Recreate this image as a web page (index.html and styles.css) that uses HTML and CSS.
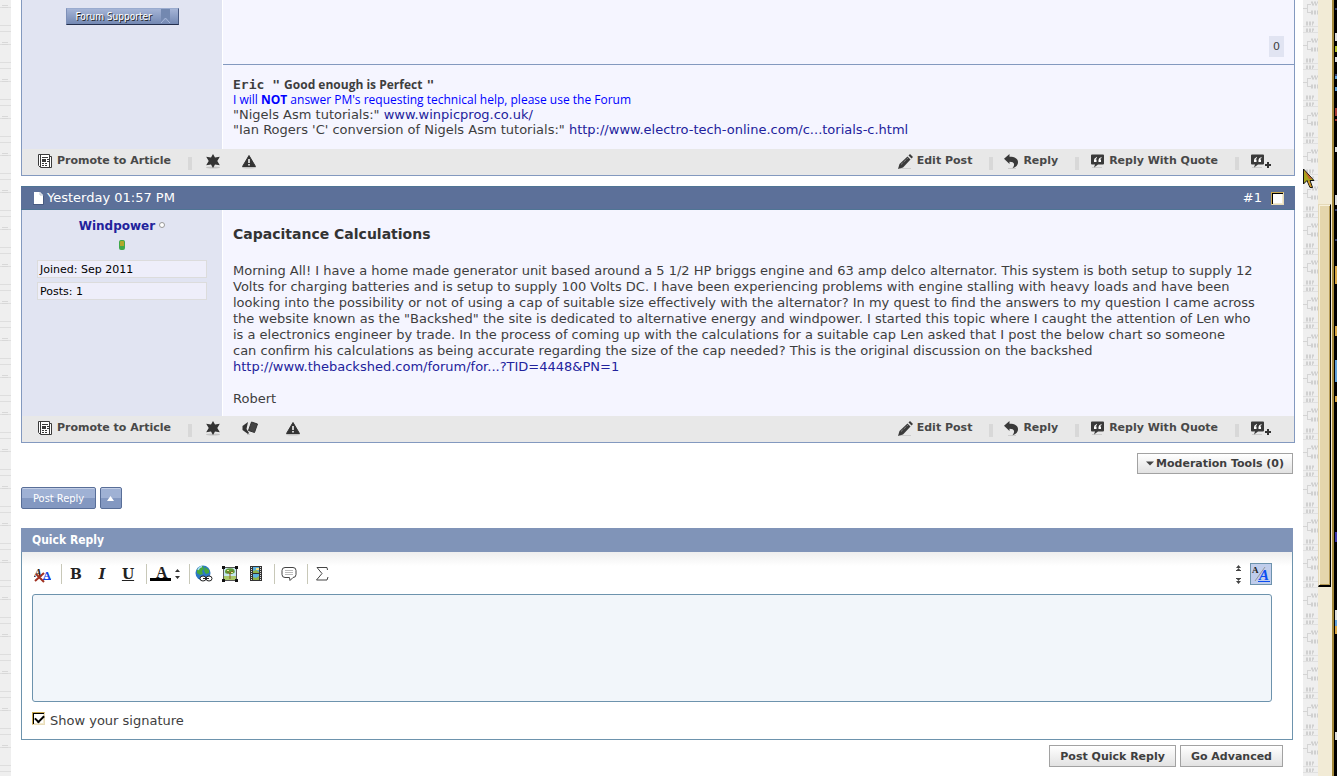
FILE: index.html
```html
<!DOCTYPE html>
<html lang="en">
<head>
    <meta charset="UTF-8">
    <meta name="viewport" content="width=device-width, initial-scale=1.0">
    <title>Capacitance Calculations</title>
    <link rel="stylesheet" href="styles.css">
</head>
<body>

    <!-- Icon set -->
    <svg class="sprite" aria-hidden="true">
        <symbol id="icon-article" viewBox="0 0 15 15">
            <path d="M.5 .5h11v2h2v11H2.500l-2-2z" fill="#fff" stroke="#3a3a3a"/>
            <path d="M2.500 1v12M11.500 2v11" stroke="#3a3a3a"/>
            <path d="M4 3.500h6M4 9.500h2M7 9.500h2M4 11.500h2M7 11.500h2" stroke="#3a3a3a"/>
            <path d="M4 5h4v3H4z" fill="#3a3a3a"/>
            <path d="M9 5.500h2M9 7.500h2" stroke="#3a3a3a"/>
        </symbol>
        <symbol id="icon-star" viewBox="0 0 15 15">
            <ellipse cx="7" cy="13.500" rx="7" ry="1" fill="#c4c4c4"/>
            <path d="M7 0l2 3.500 4.800-.8L11.300 7l2.500 4.300L9 10.500 7 14l-2-3.500-4.800.8L2.700 7 .2 2.700 5 3.500z" fill="#333"/>
        </symbol>
        <symbol id="icon-alert" viewBox="0 0 15 15">
            <ellipse cx="7" cy="13.500" rx="7" ry="1" fill="#c4c4c4"/>
            <path d="M7 1.500L13.500 12.500H.5z" fill="#333" stroke="#333" stroke-linejoin="round"/>
            <path d="M7 5v4M7 10v1.500" stroke="#fff" stroke-width="1.500"/>
        </symbol>
        <symbol id="icon-tags" viewBox="0 0 17 15">
            <path d="M6 1L.5 5v4L6 13l1-1L4.500 8z" fill="#333"/>
            <path d="M9.500 1L15.500 3 12.500 11.500 6.500 9.500z" fill="#444" stroke="#333" stroke-linejoin="round"/>
            <path d="M5 13.500h3" stroke="#ccc"/>
        </symbol>
        <symbol id="icon-pencil" viewBox="0 0 15 15">
            <path d="M2 14.500h11" stroke="#ccc"/>
            <path d="M0 15l1.500-5L9.500 2.500l3 3L5 13.500z" fill="#3a3a3a"/>
            <path d="M10.500 1.500L12 0l3 3-1.500 1.500z" fill="#3a3a3a"/>
            <path d="M3 10.500l7-6.500" stroke="#aaa" stroke-dasharray="1 1"/>
        </symbol>
        <symbol id="icon-reply" viewBox="0 0 15 15">
            <path d="M4 14.500h8" stroke="#ccc"/>
            <path d="M5.500 0v2.700C11 2.700 14 4.500 14 8.300c0 2.900-2 4.900-5.500 5.900C11 11 11 7.800 5.500 7.700V10L0 4.800z" fill="#3a3a3a"/>
        </symbol>
        <symbol id="icon-quote" viewBox="0 0 15 15">
            <path d="M2 13.500h10" stroke="#ccc"/>
            <path d="M2 .5h11q1 0 1 1v8q0 1-1 1H8L4 13.500l1-3H2q-1 0-1-1v-8q0-1 1-1z" fill="#3a3a3a"/>
            <path d="M7 3Q4 4 4 6v2h2.500V5.500h-1Q5.500 4.500 7 4zM11.500 3Q8.500 4 8.500 6v2H11V5.500h-1q0-1 1.500-1.500z" fill="#fff"/>
        </symbol>
        <symbol id="icon-plus" viewBox="0 0 7 7">
            <path d="M3 0v6M0 3h6" stroke="#333" stroke-width="2"/>
        </symbol>
    </svg>

    <!-- Left wallpaper -->
    <svg class="wallpaper wallpaper-left" aria-hidden="true">
        <defs>
            <pattern id="traces-left" width="11" height="37" patternUnits="userSpaceOnUse">
                <path d="M0 7.500h2M8 7.500h3M0 25.500h11M0 31.500h11" stroke="#dedede"/>
                <path d="M2 6l1-1 1 1 1-1 1 1 1-1 1 1M2 8l1-1 1 1 1-1 1 1 1-1 1 1" stroke="#d8d8d8" fill="none"/>
            </pattern>
        </defs>
        <rect width="100%" height="100%" fill="url(#traces-left)"/>
    </svg>

    <main class="page">

        <!-- Previous post -->
        <article class="post">
            <div class="post-main">
                <aside class="user-info">
                    <div class="supporter">Forum Supporter
                        <svg width="12" height="15" viewBox="0 0 12 15" aria-hidden="true"><path d="M1 0h9v14L5.500 9 1 14z" fill="#7388b0"/><path d="M1 14l4.500-5L10 14" fill="none" stroke="#a9b9dc"/></svg>
                    </div>
                </aside>
                <div class="post-content previous-content">
                    <div class="rating-row"><span class="rating">0</span></div>
                    <div class="signature">
                        <div class="sig-name"><span class="sig-mono">Eric "</span> <span class="sig-comic">Good enough is Perfect</span> <span class="sig-mono">"</span></div>
                        <div class="sig-notice">I will <b>NOT</b> answer PM's requesting technical help, please use the Forum</div>
                        <div>"Nigels Asm tutorials:" <a href="#">www.winpicprog.co.uk/</a></div>
                        <div>"Ian Rogers 'C' conversion of Nigels Asm tutorials:" <a href="#">http://www.electro-tech-online.com/c...torials-c.html</a></div>
                    </div>
                </div>
            </div>
            <footer class="post-actions">
                <a class="action" href="#"><svg class="icon"><use href="#icon-article"/></svg>Promote to Article</a>
                <span class="divider"></span>
                <div class="flags">
                    <a href="#" aria-label="Reputation"><svg class="icon"><use href="#icon-star"/></svg></a>
                    <a href="#" aria-label="Report"><svg class="icon"><use href="#icon-alert"/></svg></a>
                </div>
                <div class="controls">
                    <a class="action" href="#"><svg class="icon"><use href="#icon-pencil"/></svg>Edit Post</a>
                    <span class="divider"></span>
                    <a class="action" href="#"><svg class="icon"><use href="#icon-reply"/></svg>Reply</a>
                    <span class="divider"></span>
                    <a class="action" href="#"><svg class="icon"><use href="#icon-quote"/></svg>Reply With Quote</a>
                    <span class="divider"></span>
                    <a class="multiquote" href="#" aria-label="Multi-quote"><svg class="icon"><use href="#icon-quote"/></svg><svg class="icon-plus"><use href="#icon-plus"/></svg></a>
                </div>
            </footer>
        </article>

        <!-- Post #1 -->
        <article class="post">
            <header class="post-header">
                <svg width="11" height="13" viewBox="0 0 11 13" aria-hidden="true"><path d="M1 0h6l3 3v9H1z" fill="#fff"/><path d="M7 0v3h3" fill="none" stroke="#b9c0cc"/><path d="M0 12.500h10.500V4" fill="none" stroke="#485a80"/></svg>
                <span>Yesterday 01:57 PM</span>
                <a class="post-number" href="#">#1</a>
                <input class="checkbox" type="checkbox" aria-label="Select post">
            </header>
            <div class="post-main">
                <aside class="user-info">
                    <div class="user-name"><a href="#">Windpower</a> <span class="offline"></span></div>
                    <div class="reputation"></div>
                    <div class="stat">Joined: Sep 2011</div>
                    <div class="stat">Posts: 1</div>
                </aside>
                <div class="post-content post-body">
                    <h2 class="post-title">Capacitance Calculations</h2>
                    <p>Morning All! I have a home made generator unit based around a 5 1/2 HP briggs engine and 63 amp delco alternator. This system is both setup to supply 12<br>
                    Volts for charging batteries and is setup to supply 100 Volts DC. I have been experiencing problems with engine stalling with heavy loads and have been<br>
                    looking into the possibility or not of using a cap of suitable size effectively with the alternator? In my quest to find the answers to my question I came across<br>
                    the website known as the "Backshed" the site is dedicated to alternative energy and windpower. I started this topic where I caught the attention of Len who<br>
                    is a electronics engineer by trade. In the process of coming up with the calculations for a suitable cap Len asked that I post the below chart so someone<br>
                    can confirm his calculations as being accurate regarding the size of the cap needed? This is the original discussion on the backshed<br>
                    <a href="#">http://www.thebackshed.com/forum/for...?TID=4448&amp;PN=1</a></p>
                    <p>Robert</p>
                </div>
            </div>
            <footer class="post-actions">
                <a class="action" href="#"><svg class="icon"><use href="#icon-article"/></svg>Promote to Article</a>
                <span class="divider"></span>
                <div class="flags">
                    <a href="#" aria-label="Reputation"><svg class="icon"><use href="#icon-star"/></svg></a>
                    <a class="tags" href="#" aria-label="Infraction"><svg class="icon icon-wide"><use href="#icon-tags"/></svg></a>
                    <a href="#" aria-label="Report"><svg class="icon"><use href="#icon-alert"/></svg></a>
                </div>
                <div class="controls">
                    <a class="action" href="#"><svg class="icon"><use href="#icon-pencil"/></svg>Edit Post</a>
                    <span class="divider"></span>
                    <a class="action" href="#"><svg class="icon"><use href="#icon-reply"/></svg>Reply</a>
                    <span class="divider"></span>
                    <a class="action" href="#"><svg class="icon"><use href="#icon-quote"/></svg>Reply With Quote</a>
                    <span class="divider"></span>
                    <a class="multiquote" href="#" aria-label="Multi-quote"><svg class="icon"><use href="#icon-quote"/></svg><svg class="icon-plus"><use href="#icon-plus"/></svg></a>
                </div>
            </footer>
        </article>

        <div class="below-posts">
            <div class="moderation">
                <button class="button button-menu" type="button"><svg width="8" height="5" viewBox="0 0 8 5" aria-hidden="true"><path d="M0 .5h8L4 4.500z" fill="#444"/></svg>Moderation Tools (0)</button>
            </div>

            <div class="thread-buttons">
                <button class="thread-button" type="button">Post Reply</button>
                <button class="thread-button thread-button-top" type="button" aria-label="Top"><svg width="8" height="5" viewBox="0 0 8 5"><path d="M0 5h7L3.500 0z" fill="#fff"/></svg></button>
            </div>

            <!-- Quick reply -->
            <form class="quick-reply">
                <div class="reply-box">
                    <h3 class="reply-title">Quick Reply</h3>
                    <div class="reply-content">
                        <div class="toolbar">
                            <button class="tool" type="button" aria-label="Remove formatting">
                                <svg width="18" height="20" viewBox="0 0 18 20"><text class="serif slanted" x="0" y="13" font-size="12" fill="#222">A</text><text class="serif" x="9" y="15" font-size="11" fill="#1443e0">A</text><path d="M9 15.500h8" stroke="#1443e0"/><path d="M2 10l8 8M10 9l-9 8" stroke="#a03020" stroke-width="2"/></svg>
                            </button>
                            <span class="tool-divider"></span>
                            <button class="tool letter" type="button">B</button>
                            <button class="tool letter italic" type="button">I</button>
                            <button class="tool letter underline" type="button">U</button>
                            <span class="tool-divider"></span>
                            <button class="tool tool-color" type="button" aria-label="Text colour">
                                <svg width="32" height="20" viewBox="0 0 32 20"><text class="serif" x="6" y="14" font-size="16" fill="#222">A</text><path d="M0 14h21v3H0z" fill="#000"/><path d="M25 8h5l-2.500-3zM25 12h5l-2.500 3z" fill="#333"/></svg>
                            </button>
                            <span class="tool-divider"></span>
                            <button class="tool" type="button" aria-label="Link">
                                <svg width="18" height="18" viewBox="0 0 18 18"><circle cx="8" cy="8" r="7.500" fill="#2b78c4"/><path d="M2 5q2-4 6-4l1 3-2 2 1 3-3 1-3-2zM10 2l4 3v3l-3 1-2-3z" fill="#46a83d"/><path d="M3 5q1-3 4-3.500" stroke="#a9dcf5" fill="none" stroke-width="1.500"/><ellipse cx="8" cy="13.500" rx="3" ry="2.500" fill="#fff" stroke="#222"/><ellipse cx="14" cy="13.500" rx="3" ry="2.500" fill="#fff" stroke="#222"/><path d="M8 13.500h6" stroke="#222"/></svg>
                            </button>
                            <button class="tool" type="button" aria-label="Image">
                                <svg width="18" height="18" viewBox="0 0 18 18"><path d="M2.500 2.500h13v13h-13z" fill="#c6e6ef" stroke="#555"/><path d="M3 11h12v4H3z" fill="#a9c86a"/><path d="M4 7q0-3 3-3.500 4-1 6 1 2 3-1 4-2 1-4 0-4 1-4-1.500z" fill="#5f9a35"/><path d="M9 14V8l3-2M9 9L6 6.500" stroke="#8a5a20" fill="none"/><path d="M6 5h2v1H6zM10 7h2v1h-2z" fill="#e5e89a"/><path d="M1 1h3v3H1zM14 1h3v3h-3zM1 14h3v3H1zM14 14h3v3h-3z" fill="#111"/></svg>
                            </button>
                            <button class="tool" type="button" aria-label="Video">
                                <svg width="18" height="18" viewBox="0 0 18 18"><path d="M3 1h12v15H3z" fill="#333"/><path d="M6 2h6v6H6zM6 9h6v6H6z" fill="#5bb1df"/><path d="M6 8V6l3-1 3 2v1zM6 15v-3l3 1 3-2v4z" fill="#8fb34a"/><path d="M9 3h3v2H9z" fill="#efe08a"/><path d="M4.500 2v14M13.500 2v14" stroke="#ddd" stroke-dasharray="1 1"/></svg>
                            </button>
                            <span class="tool-divider"></span>
                            <button class="tool" type="button" aria-label="Quote">
                                <svg width="18" height="18" viewBox="0 0 18 18"><path d="M5 2.500h8q3 0 3 3v4q0 3-3 3l-3 3-.5-3H5q-3 0-3-3v-4q0-3 3-3z" fill="#fff" stroke="#444"/><path d="M5 5.500h8M5 7.500h8M5 9.500h8" stroke="#bbb"/></svg>
                            </button>
                            <span class="tool-divider"></span>
                            <button class="tool" type="button" aria-label="Formula">
                                <svg width="18" height="18" viewBox="0 0 18 18"><path d="M14.500 5L14 2.500H4L9 8.500 3.500 15H14l1-3" fill="none" stroke="#444"/></svg>
                            </button>
                            <button class="tool tool-resize" type="button" aria-label="Resize editor">
                                <svg width="10" height="20" viewBox="0 0 10 20"><path d="M3 4h5L5.500 1zM3 7h5L5.500 4zM3 14h5l-2.500 3zM3 17h5l-2.500 3z" fill="#444"/><path d="M3 6.500h5M3 14.500h5" stroke="#444"/></svg>
                            </button>
                            <button class="tool tool-switch" type="button" aria-label="Switch editor mode">
                                <svg width="20" height="20" viewBox="0 0 20 20"><text class="serif" x="1" y="9" font-size="9" fill="#222">A</text><path d="M4 17L14 3" stroke="#999"/><text class="serif slanted" x="8" y="16" font-size="15" fill="#0c4df0">A</text><path d="M7 17.500h12" stroke="#0c4df0"/></svg>
                            </button>
                        </div>
                        <textarea class="message" aria-label="Message"></textarea>
                        <div class="signature-option">
                            <input class="checkbox" type="checkbox" id="show-signature" checked>
                            <label for="show-signature">Show your signature</label>
                        </div>
                    </div>
                </div>
                <div class="reply-buttons">
                    <button class="button" type="button">Post Quick Reply</button>
                    <button class="button" type="button">Go Advanced</button>
                </div>
            </form>
        </div>
    </main>

    <!-- Right wallpaper with the mouse pointer over it -->
    <div class="right-side">
        <svg class="wallpaper wallpaper-right" aria-hidden="true">
            <defs>
                <pattern id="traces-right" width="16" height="37" patternUnits="userSpaceOnUse">
                    <path d="M0 8.500h4M4.500 4v9M4 4.500h4M4 12.500h4" stroke="#d4d4d4" fill="none"/>
                    <path d="M8 2.500h7M9 4.500h6M8 11.500h7M8 13.500h7M3 22.500h8M3 24.500h7M3 29.500h8M3 31.500h7" stroke="#d0d0d0" stroke-width="2" stroke-dasharray="2 1"/>
                    <path d="M0 26.500h16M0 32.500h16" stroke="#e0e0e0"/>
                </pattern>
            </defs>
            <rect width="100%" height="100%" fill="url(#traces-right)"/>
        </svg>
        <svg class="pointer" width="12" height="21" viewBox="0 0 12 21" aria-hidden="true"><path d="M.5 1v15l3.500-3.500 3 7h2.500l-2.500-7h4z" fill="#a9a51c" stroke="#111"/><path d="M1 2l8 9H6z" fill="#c4622d"/><path d="M5.500 13l2.500 6" stroke="#d9952b" stroke-width="1.500"/></svg>
    </div>

    <div class="scrollbar"><div class="scroll-thumb"></div></div>

    <!-- Edge of the desktop behind the window -->
    <svg class="desktop-edge" viewBox="0 0 3 776" preserveAspectRatio="none" aria-hidden="true">
        <path d="M1 9h2M1 75h2M1 210h2M1 240h2M1 541h2" stroke="#6b7fd0"/>
        <path d="M1 33h2v8H1zM1 57h2v5H1zM1 147h2v5H1zM1 195h2v10H1zM1 610h2v14H1zM1 732h2v8H1z" fill="#ddd"/>
        <path d="M1 46h2v6H1z" fill="#b5c22a"/>
        <path d="M1 76h2v3H1zM1 87h2v4H1zM1 360h2v22H1zM1 620h2v6H1z" fill="#5f9fd8"/>
        <path d="M1 108h2v8H1zM1 119h2v2H1z" fill="#a33a34"/>
        <path d="M1 266h2v18H1zM1 326h2v10H1zM1 396h2v6H1zM1 626h2v8H1z" fill="#d8a848"/>
        <path d="M1 532h2v10H1z" fill="#3b35a8"/>
    </svg>

</body>
</html>
```
FILE: styles.css
```css
* {
    box-sizing: border-box;
}

body {
    display: flex;
    min-height: 100vh;
    margin: 0;
    background-color: #efefef;
    color: #3e3e3e;
    font-family: Verdana, "DejaVu Sans", sans-serif;
    font-size: 13px;
    line-height: 16px;
}

a {
    color: #22229c;
    text-decoration: none;
}

button {
    font-family: inherit;
}

svg {
    display: block;
    flex: none;
}

.sprite {
    position: absolute;
    width: 0;
    height: 0;
}

/* Frame around the page */
.wallpaper {
    height: 100%;
}

.wallpaper-left {
    width: 11px;
    height: auto;
}

.wallpaper-right {
    width: 15px;
}

.right-side {
    position: relative;
    flex: none;
    width: 15px;
}

.pointer {
    position: absolute;
    top: 168px;
    left: 0;
}

.scrollbar {
    flex: none;
    width: 16px;
    padding-top: 204px;
    background-color: #f2ebd6;
    border-right: 2px solid #a58a3c;
}

.scroll-thumb {
    width: 13px;
    height: 383px;
    background-color: #e5d6ad;
    border: 1px solid #e5d9b8;
    border-right: 1px solid #000;
    border-bottom: 2px solid #000;
    box-shadow: inset 1px 1px #f7f0da, inset -1px -1px #b59a55;
}

.desktop-edge {
    width: 3px;
    height: auto;
    background-color: #000;
}

.page {
    flex: 1;
    min-width: 0;
    padding: 0 8px 9px 10px;
    background-color: #fff;
}

/* Posts */
.post {
    margin-bottom: 10px;
    border: 1px solid #8399bf;
    border-top: none;
}

.post-header {
    display: flex;
    align-items: center;
    height: 24px;
    margin: 0 -1px;
    padding: 0 11px 0 12px;
    gap: 3px;
    background-color: #5c7099;
    border: 1px solid #4f7494;
    border-width: 1px 0;
    color: #fff;
}

.post-number {
    margin-left: auto;
    margin-right: 6px;
    color: #fff;
}

.post-main {
    display: flex;
}

.user-info {
    flex: none;
    width: 200px;
    padding: 8px 15px 0;
    background-color: #e1e4f2;
}

.post-content {
    flex: 1;
    min-width: 0;
    margin-left: 1px;
    background-color: #f5f5ff;
}

.supporter {
    display: flex;
    justify-content: space-between;
    width: 113px;
    height: 17px;
    margin: 0 auto;
    padding: 0 6px 0 9px;
    background: linear-gradient(#a5b4d6, #7388b3);
    border: 1px solid #7e90b8;
    border-color: #9aabcf #47587f #232f4d #7e90b8;
    color: #fff;
    font-family: Tahoma, "DejaVu Sans Condensed", sans-serif;
    font-size: 10px;
    line-height: 15px;
    text-shadow: 1px 1px #222;
    white-space: nowrap;
}

.rating-row {
    display: flex;
    justify-content: flex-end;
    align-items: flex-end;
    height: 65px;
    padding: 0 10px 7px;
    border-bottom: 1px solid #8399bf;
}

.rating {
    width: 15px;
    height: 21px;
    background-color: #e1e4f2;
    font-size: 11px;
    line-height: 21px;
    text-align: center;
}

.signature {
    padding: 12px 10px;
    line-height: 15px;
}

.sig-mono {
    font-family: "DejaVu Sans Mono", monospace;
    font-size: 13px;
    font-weight: bold;
}

.sig-comic {
    font-family: "Comic Sans MS", "Open Sans", sans-serif;
    font-size: 12px;
    font-weight: bold;
}

.sig-notice {
    color: #0000ff;
    font-family: "Comic Sans MS", "Open Sans", sans-serif;
    font-size: 12px;
}

.user-name {
    font-size: 12px;
    font-weight: bold;
    text-align: center;
}

.offline {
    display: inline-block;
    width: 6px;
    height: 6px;
    margin-bottom: 2px;
    border: 1px solid #999;
    border-radius: 3px;
    background-color: #fff;
}

.reputation {
    width: 6px;
    height: 10px;
    margin: 6px auto 10px;
    background-color: #b0a82a;
    border: 1px solid #3fa84a;
    border-bottom-width: 4px;
    border-radius: 2px;
}

.stat {
    height: 18px;
    margin-bottom: 4px;
    padding: 0 2px;
    background-color: #eeeefa;
    border: 1px solid #dcdcdc;
    color: #000;
    font-size: 11px;
    line-height: 17px;
}

.post-body {
    padding: 15px 10px 9px;
    white-space: nowrap;
}

.post-body p {
    margin: 0 0 16px;
}

.post-body p:last-child {
    margin: 0;
}

.post-title {
    margin: 0 0 20px;
    font-size: 14px;
    line-height: 18px;
    color: #333;
}

.post-actions {
    display: flex;
    align-items: center;
    height: 26px;
    padding: 0 22px 2px 16px;
    background-color: #e8e8e8;
}

.action {
    display: flex;
    align-items: center;
    gap: 4px;
    color: #484848;
    font-size: 11px;
    font-weight: bold;
    white-space: nowrap;
}

.icon {
    width: 15px;
    height: 15px;
}

.icon-wide {
    width: 17px;
}

.divider {
    width: 4px;
    height: 13px;
    margin: 4px 11px 0 17px;
    background-color: #d8d8d8;
}

.flags {
    display: flex;
    gap: 21px;
    margin-left: 3px;
}

.tags {
    margin-right: 6px;
}

.controls {
    display: flex;
    align-items: center;
    margin-left: auto;
}

.multiquote {
    display: flex;
    align-items: flex-end;
}

.icon-plus {
    width: 7px;
    height: 7px;
}

/* Buttons */
.button {
    display: flex;
    align-items: center;
    gap: 2px;
    height: 22px;
    padding: 0 10px;
    background: linear-gradient(#fff, #e2e2e2);
    border: 1px solid #a2a2a2;
    color: #3e3e3e;
    font-size: 11px;
    font-weight: bold;
    white-space: nowrap;
}

.button-menu {
    height: 21px;
    padding: 0 8px;
}

.below-posts {
    margin-right: 2px;
}

.moderation {
    display: flex;
    justify-content: flex-end;
}

.thread-buttons {
    display: flex;
    gap: 4px;
    margin: 13px 0 19px;
}

.thread-button {
    height: 22px;
    padding: 0 11px;
    background: linear-gradient(#9fb1d4 50%, #8398c1 50%);
    border: 1px solid #586e98;
    border-radius: 2px;
    box-shadow: inset 0 1px #c4cfe6;
    color: #fff;
    font-family: Tahoma, "DejaVu Sans Condensed", sans-serif;
    font-size: 11px;
}

.thread-button-top {
    padding: 0 6px;
}

/* Quick reply form */
.quick-reply {
    margin: 0;
}

.reply-box {
    border: 1px solid #6d93ad;
}

.reply-title {
    margin: -1px -1px 0;
    padding: 0 11px;
    background-color: #8094b8;
    color: #fff;
    font-family: Tahoma, "DejaVu Sans Condensed", sans-serif;
    font-size: 12px;
    line-height: 24px;
}

.reply-content {
    padding: 9px 20px 10px 10px;
    background: linear-gradient(#eee, #fff 14px);
}

.toolbar {
    display: flex;
    align-items: center;
    height: 26px;
    margin: 0 0 7px -2px;
}

.tool {
    display: flex;
    align-items: center;
    justify-content: center;
    width: 26px;
    height: 24px;
    padding: 0;
    background: none;
    border: none;
}

.serif {
    font-family: "Liberation Serif", serif;
    font-weight: bold;
}

.letter {
    color: #222;
    font-family: "DejaVu Serif", serif;
    font-size: 14px;
    font-weight: bold;
}

.italic,
.slanted {
    font-style: italic;
}

.underline {
    text-decoration: underline;
}

.tool-color {
    width: 36px;
}

.tool-divider {
    width: 1px;
    height: 20px;
    margin: 0 1px 0 5px;
    background-color: #c8c8b8;
}

.tool-resize {
    width: 20px;
    margin-left: auto;
    margin-right: 2px;
}

.tool-switch {
    width: 22px;
    height: 22px;
    background-color: #c0cdec;
    border: 1px solid #6d93ad;
}

.message {
    display: block;
    width: 100%;
    height: 108px;
    padding: 4px;
    background-color: #f2f6fa;
    border: 1px solid #6d93ad;
    border-radius: 3px;
    resize: none;
}

.signature-option {
    display: flex;
    align-items: flex-start;
    gap: 5px;
    padding-top: 10px;
}

.signature-option label {
    line-height: 17px;
}

.checkbox {
    appearance: none;
    flex: none;
    width: 13px;
    height: 13px;
    margin: 0;
    background-color: #fff;
    border: 1px solid #c8a850;
    border-right-color: #e8dcb8;
    border-bottom-color: #e8dcb8;
    box-shadow: inset 1px 1px #000, inset -1px -1px #f2ead0;
}

.checkbox:checked::before {
    content: "";
    display: block;
    width: 7px;
    height: 4px;
    margin: 2px;
    border: solid #000;
    border-width: 0 0 2px 2px;
    transform: rotate(-45deg);
}

.reply-buttons {
    display: flex;
    justify-content: flex-end;
    gap: 4px;
    margin: 5px 10px 0 0;
}
```
